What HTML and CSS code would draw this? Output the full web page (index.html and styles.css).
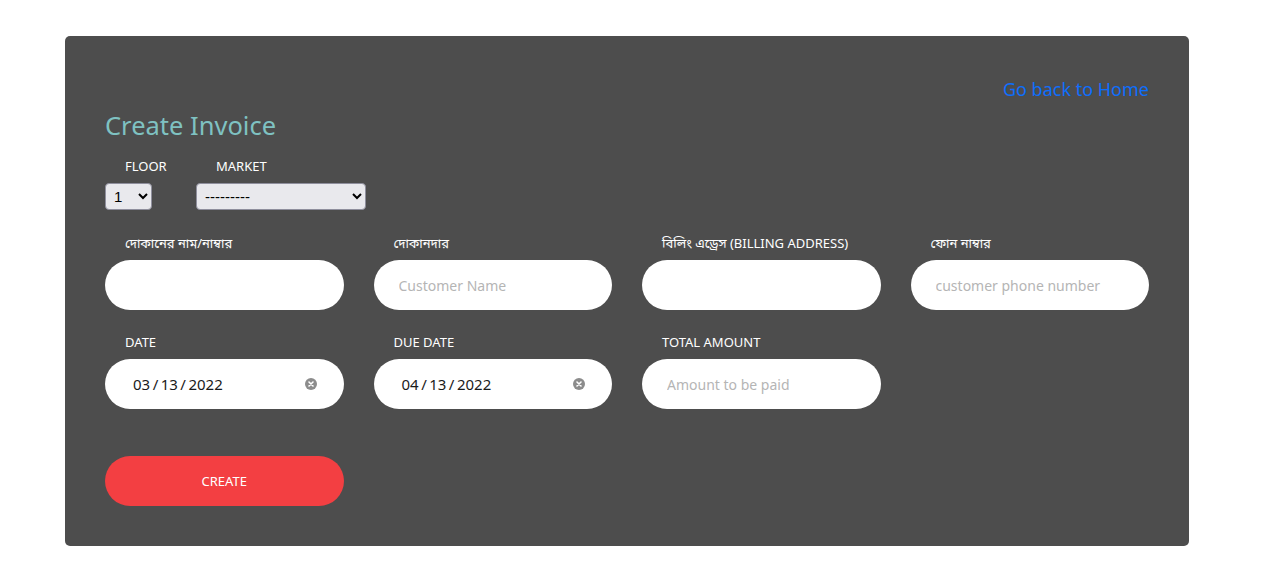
FILE: index.html
```html
<!DOCTYPE html>
<html lang="bn">

<head>
  <meta charset="UTF-8">
  <meta name="viewport" content="width=device-width, initial-scale=1.0">
  <title>Create Invoice</title>
  <link rel="stylesheet" href="styles.css">
</head>

<body>

  <div class="card">

    <div class="top-link">
      <a href="#">Go back to Home</a>
    </div>

    <h1 class="title">Create Invoice</h1>

    <div class="select-row">
      <div class="select-field floor">
        <label for="floor">FLOOR</label>
        <select id="floor">
          <option>1</option>
          <option>2</option>
          <option>3</option>
        </select>
      </div>
      <div class="select-field market">
        <label for="market">MARKET</label>
        <select id="market">
          <option>---------</option>
        </select>
      </div>
    </div>

    <div class="form-grid">
      <div class="field">
        <label for="shop">দোকানের নাম/নাম্বার</label>
        <input type="text" id="shop">
      </div>
      <div class="field">
        <label for="customer">দোকানদার</label>
        <input type="text" id="customer" placeholder="Customer Name">
      </div>
      <div class="field">
        <label for="address">বিলিং এড্রেস (BILLING ADDRESS)</label>
        <input type="text" id="address">
      </div>
      <div class="field">
        <label for="phone">ফোন নাম্বার</label>
        <input type="text" id="phone" placeholder="customer phone number">
      </div>

      <div class="field">
        <label>DATE</label>
        <div class="date-input">
          <span>03&thinsp;/&thinsp;13&thinsp;/&thinsp;2022</span>
          <svg class="clear" width="12" height="12" viewBox="0 0 12 12">
            <circle cx="6" cy="6" r="6" fill="#8c8c8c" />
            <path d="M4 4 L8 8 M8 4 L4 8" stroke="#fff" stroke-width="1.6" stroke-linecap="round" />
          </svg>
        </div>
      </div>
      <div class="field">
        <label>DUE DATE</label>
        <div class="date-input">
          <span>04&thinsp;/&thinsp;13&thinsp;/&thinsp;2022</span>
          <svg class="clear" width="12" height="12" viewBox="0 0 12 12">
            <circle cx="6" cy="6" r="6" fill="#8c8c8c" />
            <path d="M4 4 L8 8 M8 4 L4 8" stroke="#fff" stroke-width="1.6" stroke-linecap="round" />
          </svg>
        </div>
      </div>
      <div class="field">
        <label for="amount">TOTAL AMOUNT</label>
        <input type="text" id="amount" placeholder="Amount to be paid">
      </div>
    </div>

    <div class="form-grid actions">
      <button class="create">CREATE</button>
    </div>

  </div>

</body>

</html>
```

FILE: styles.css
```css
body {
  font-family: 'Noto Sans', 'Noto Sans Bengali', sans-serif;
  background-color: #fff;
  margin: 0;
  padding: 36px 0 0 65px;
}

.card {
  width: 1124px;
  box-sizing: border-box;
  background-color: #4d4d4d;
  border-radius: 5px;
  padding: 40px;
  color: #fff;
}

.top-link {
  text-align: right;
  font-size: 18px;
  line-height: 26px;
}

.top-link a {
  color: #0d6efd;
  text-decoration: none;
}

.title {
  margin: 6px 0 0;
  font-size: 25.5px;
  font-weight: 400;
  line-height: 34px;
  color: #7fc2c2;
}

.select-row {
  display: flex;
  margin-top: 14px;
}

.select-field label {
  display: block;
  font-size: 13px;
  line-height: 20px;
  padding-left: 20px;
  margin-bottom: 7px;
}

.floor {
  width: 91px;
}

.select-field select {
  height: 27px;
  font-family: 'Liberation Sans', sans-serif;
  font-size: 15px;
  background-color: #e9e9ed;
  border: 1px solid #8f8f9d;
  border-radius: 4px;
  color: #000;
  padding: 0 4px;
}

.floor select {
  width: 47px;
}

.market select {
  width: 170px;
}

.form-grid {
  display: grid;
  grid-template-columns: repeat(4, 1fr);
  column-gap: 30px;
  row-gap: 22px;
  margin-top: 23px;
}

.field label {
  display: block;
  font-size: 13px;
  line-height: 20px;
  padding-left: 20px;
  margin-bottom: 7px;
}

.field input,
.date-input {
  display: block;
  width: 100%;
  height: 50px;
  box-sizing: border-box;
  border: none;
  border-radius: 25px;
  background-color: #fff;
  padding: 0 25px;
  font-family: inherit;
  font-size: 14px;
  color: #212529;
  outline: none;
}

.field input::placeholder {
  color: #b5b5b5;
}

.date-input {
  display: flex;
  align-items: center;
  justify-content: space-between;
  padding: 0 27px 0 28px;
  font-size: 15px;
  color: #1a1a1a;
}

.actions {
  margin-top: 47px;
}

.create {
  height: 50px;
  border: none;
  border-radius: 25px;
  background-color: #f33f42;
  color: #fff;
  font-family: inherit;
  font-size: 13px;
  cursor: pointer;
}
```
